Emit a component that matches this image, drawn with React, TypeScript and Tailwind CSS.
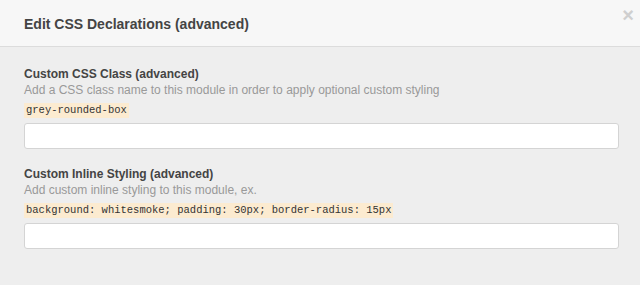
import React from 'react';

const Field = ({ label, help, example }: { label: string; help: string; example: string }) => (
  <div className="flex flex-col">
    <label className="text-[12px] font-bold leading-[16px] text-[#444]">{label}</label>
    <p className="text-[12px] leading-[16px] text-[#999]">{help}</p>
    <div className="mt-[5px] flex">
      <code className="bg-[#fcebd0] px-[2px] font-['Liberation_Mono',monospace] text-[10.5px] leading-[15px] text-[#333]">
        {example}
      </code>
    </div>
    <input
      type="text"
      className="mt-[5px] h-[26px] w-full rounded-[3px] border border-[#d4d4d4] bg-white px-2 text-[12px] outline-none"
    />
  </div>
);

export default function App() {
  return (
    <div className="flex h-[285px] w-[640px] flex-col bg-[#eeeeee] font-['Liberation_Sans',Arial,sans-serif]">
      <header className="flex h-[47px] items-center justify-between border-b border-[#dcdcdc] bg-[#f7f7f7] pl-[24px] pr-[6px]">
        <h2 className="pt-[3px] text-[14px] font-bold text-[#444]">Edit CSS Declarations (advanced)</h2>
        <button className="-mt-[16px] text-[20px] font-bold leading-none text-[#cfcfcf]">×</button>
      </header>
      <main className="flex flex-col gap-[17px] pl-[24px] pr-[21px] pt-[19px]">
        <Field
          label="Custom CSS Class (advanced)"
          help="Add a CSS class name to this module in order to apply optional custom styling"
          example="grey-rounded-box"
        />
        <Field
          label="Custom Inline Styling (advanced)"
          help="Add custom inline styling to this module, ex."
          example="background: whitesmoke; padding: 30px; border-radius: 15px"
        />
      </main>
    </div>
  );
}
